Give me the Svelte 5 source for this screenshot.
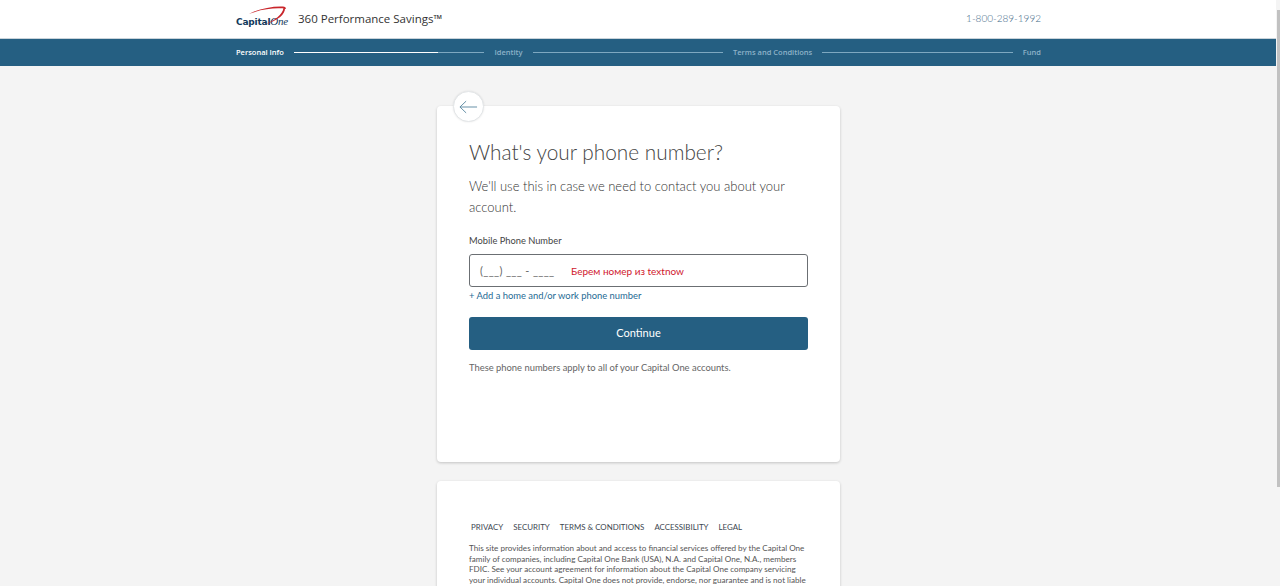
<script>
    const steps = [
        { label: 'Personal Info', active: true, progress: 100 * 144 / 191 },
        { label: 'Identity' },
        { label: 'Terms and Conditions' },
        { label: 'Fund' }
    ]
    const links = ['PRIVACY', 'SECURITY', 'TERMS & CONDITIONS', 'ACCESSIBILITY', 'LEGAL']
</script>

<div class="page">
    <div class="main">
        <header class="top">
            <div class="wrap top-row">
                <div class="brand">
                    <div class="logo">
                        <span class="capital">Capital</span><span class="one">One</span>
                        <svg class="swoosh" viewBox="0 0 54 20" width="54" height="20" aria-hidden="true">
                            <path d="M13 8 C22 3 36 0 47 0.5 C49 0.6 50 1.5 50 3 C42 1.5 27 2.5 13 8 Z" fill="#c9252b"/>
                            <path d="M49 2 C49.5 8 42 15 28 18.5 C39 14.5 46.5 8.5 47.5 2 Z" fill="#c9252b"/>
                        </svg>
                    </div>
                    <span class="product">360 Performance Savings™</span>
                </div>
                <span class="phone">1-800-289-1992</span>
            </div>
        </header>

        <nav class="bar">
            <div class="wrap steps">
                {#each steps as step, i}
                    <span class="step" class:active={step.active}>{step.label}</span>
                    {#if i < steps.length - 1}
                        <span class="line">
                            {#if step.progress}
                                <span class="fill" style="width: {step.progress}%"></span>
                            {/if}
                        </span>
                    {/if}
                {/each}
            </div>
        </nav>

        <main class="content">
            <section class="card form">
                <button class="back" aria-label="Back">
                    <svg viewBox="0 0 20 14" width="19" height="14" fill="none" stroke="#5f8ba3" stroke-width="1">
                        <path d="M19 7 H1 M7.5 .8 L1 7 L7.5 13.2"/>
                    </svg>
                </button>
                <h1>What's your phone number?</h1>
                <p class="lead">We'll use this in case we need to contact you about your account.</p>
                <label for="phone">Mobile Phone Number</label>
                <div class="field">
                    <span id="phone" class="mask">(___) ___ - ____</span>
                    <span class="note">Берем номер из textnow</span>
                </div>
                <a class="add" href="#add">+ Add a home and/or work phone number</a>
                <button class="continue">Continue</button>
                <p class="hint">These phone numbers apply to all of your Capital One accounts.</p>
            </section>

            <footer class="card legal">
                <ul>
                    {#each links as link}
                        <li>{link}</li>
                    {/each}
                </ul>
                <p>This site provides information about and access to financial services offered by the Capital One family of companies, including Capital One Bank (USA), N.A. and Capital One, N.A., members FDIC. See your account agreement for information about the Capital One company servicing your individual accounts. Capital One does not provide, endorse, nor guarantee and is not liable</p>
            </footer>
        </main>
    </div>
    <div class="scrollbar"><span class="thumb"></span></div>
</div>

<style>
    :global(html), :global(body) {
        height: 100%;
        overflow: hidden;
    }
    :global(body) {
        background: #f4f4f4;
        font-family: Lato, "Open Sans", sans-serif;
    }
    .page {
        display: flex;
        height: 586px;
        overflow: hidden;
    }
    .main {
        flex: 1;
        min-width: 0;
    }
    .scrollbar {
        width: 4px;
        background: #f4f4f4;
        padding: 10px 0 0 1px;
        box-sizing: border-box;
    }
    .thumb {
        display: block;
        height: 477px;
        background: #c1c1c1;
    }
    .wrap {
        width: 805px;
        margin-left: 236px;
    }
    .top {
        background: #fff;
        height: 38px;
    }
    .top-row {
        display: flex;
        justify-content: space-between;
        align-items: center;
        height: 36px;
    }
    .brand {
        display: flex;
        align-items: center;
        gap: 9px;
    }
    .logo {
        position: relative;
        width: 53px;
        line-height: 12px;
        padding-top: 4px;
        white-space: nowrap;
        color: #12395b;
    }
    .swoosh {
        position: absolute;
        left: 0;
        top: -3px;
    }
    .capital {
        font-family: "DejaVu Sans", sans-serif;
        font-weight: 700;
        font-size: 9px;
        letter-spacing: -0.2px;
    }
    .one {
        font-family: "Liberation Serif", serif;
        font-style: italic;
        font-size: 11px;
        letter-spacing: -0.3px;
    }
    .product {
        font-family: "Open Sans", sans-serif;
        font-size: 11.5px;
        color: #333;
    }
    .phone {
        font-size: 10px;
        font-weight: 300;
        color: #3f6a87;
    }
    .bar {
        background: #255f82;
        height: 27px;
        border-top: 1px solid #c9d3da;
    }
    .steps {
        display: flex;
        align-items: center;
        height: 26px;
        gap: 10px;
    }
    .step {
        font-family: "Open Sans", sans-serif;
        font-size: 7.5px;
        font-weight: 600;
        color: #8db2c8;
        white-space: nowrap;
    }
    .step.active {
        color: #fff;
    }
    .line {
        flex: 1;
        height: 1px;
        background: #7ea8c0;
        position: relative;
    }
    .fill {
        position: absolute;
        left: 0;
        top: 0;
        height: 1px;
        background: #fff;
    }
    .content {
        display: flex;
        flex-direction: column;
        align-items: center;
        gap: 19px;
        padding-top: 40px;
        padding-left: 1px;
    }
    .card {
        width: 403px;
        box-sizing: border-box;
        background: #fff;
        border-radius: 4px;
        box-shadow: 0 1px 3px rgba(0, 0, 0, 0.2);
        padding: 0 32px;
    }
    .form {
        position: relative;
        height: 356px;
        padding-top: 32px;
    }
    .back {
        position: absolute;
        left: 16px;
        top: -15px;
        width: 31px;
        height: 31px;
        border-radius: 50%;
        background: #fff;
        border: 1px solid #e3e6e8;
        box-shadow: 0 0 2px rgba(0, 0, 0, 0.1);
        padding: 0;
        display: flex;
        align-items: center;
        justify-content: center;
    }
    h1 {
        margin: 0;
        font-size: 20.8px;
        line-height: 28px;
        font-weight: 300;
        color: #444;
    }
    .lead {
        margin: 10px 0 0;
        font-size: 13px;
        line-height: 21px;
        font-weight: 300;
        color: #333;
    }
    label {
        display: block;
        margin-top: 17px;
        font-size: 9.3px;
        line-height: 12px;
        color: #444;
    }
    .field {
        box-sizing: border-box;
        height: 33px;
        margin-top: 7px;
        border: 1px solid #6b6f73;
        border-radius: 3px;
        display: flex;
        align-items: center;
        padding: 0 10px;
        gap: 17px;
    }
    .mask {
        font-size: 11px;
        letter-spacing: 0.35px;
        color: #666;
        width: 74px;
        white-space: nowrap;
    }
    .note {
        font-size: 10px;
        color: #d0182d;
    }
    .add {
        display: block;
        margin-top: 2px;
        font-size: 9.4px;
        line-height: 13px;
        color: #1f6b94;
        text-decoration: none;
    }
    .continue {
        display: block;
        width: 100%;
        height: 33px;
        margin-top: 15px;
        padding: 0 0 2px;
        border: 0;
        border-radius: 3px;
        background: #255f82;
        color: #fff;
        font-family: inherit;
        font-size: 11px;
    }
    .hint {
        margin: 11px 0 0;
        font-size: 9.4px;
        line-height: 13px;
        color: #666;
    }
    .legal {
        padding-top: 40px;
        padding-bottom: 40px;
    }
    ul {
        display: flex;
        gap: 10px;
        list-style: none;
        margin: 0;
        padding: 0 2px;
        font-size: 7.9px;
        line-height: 12px;
        color: #3c4650;
    }
    .legal p {
        margin: 10px 0 0;
        font-size: 8.1px;
        line-height: 10.6px;
        color: #555;
    }
</style>
